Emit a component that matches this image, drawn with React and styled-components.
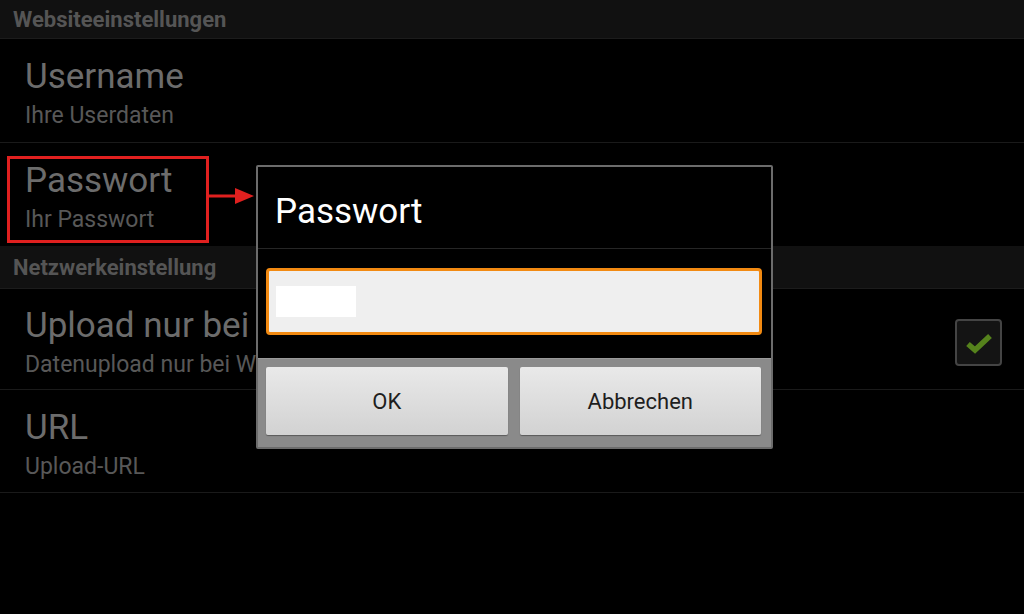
import React from "react";
import styled, { createGlobalStyle } from "styled-components";

const Global = createGlobalStyle`
  html, body {
    margin: 0;
    padding: 0;
    background: #000;
  }
  body {
    font-family: Roboto, "Noto Sans", "Liberation Sans", sans-serif;
  }
`;

const Screen = styled.div`
  position: relative;
  width: 1024px;
  height: 614px;
  overflow: hidden;
  background: #000;
  display: flex;
  flex-direction: column;
`;

const SectionHeader = styled.div`
  height: ${(p) => p.h}px;
  box-sizing: border-box;
  background: #111111;
  border-bottom: 1px solid #1c1c1c;
  display: flex;
  align-items: center;
  padding-left: 13px;
  font-size: 22px;
  font-weight: 700;
  color: #555555;
`;

const Row = styled.div`
  height: ${(p) => p.h}px;
  box-sizing: border-box;
  border-bottom: ${(p) => (p.noLine ? "none" : "1px solid #1a1a1a")};
  display: flex;
  align-items: center;
  justify-content: space-between;
  padding: 7px 22px 0 25px;
`;

const RowText = styled.div`
  display: flex;
  flex-direction: column;
  gap: 6px;
`;

const Title = styled.div`
  font-size: 35px;
  line-height: 38px;
  color: #6c6c6c;
`;

const Subtitle = styled.div`
  font-size: 23px;
  line-height: 28px;
  color: #585858;
`;

const Checkbox = styled.div`
  width: 47px;
  height: 47px;
  box-sizing: border-box;
  border: 2px solid #444;
  border-radius: 4px;
  background: #141414;
  display: flex;
  align-items: center;
  justify-content: center;
`;

const Marker = styled.div`
  position: absolute;
  left: 7px;
  top: 156px;
  width: 202px;
  height: 87px;
  box-sizing: border-box;
  border: 3px solid #e0201f;
`;

const Arrow = styled.svg`
  position: absolute;
  left: 208px;
  top: 185px;
`;

const Dialog = styled.div`
  position: absolute;
  left: 256px;
  top: 165px;
  width: 517px;
  height: 284px;
  box-sizing: border-box;
  border: 2px solid #6c6c6c;
  border-radius: 2px;
  background: #000;
  display: flex;
  flex-direction: column;
`;

const DialogTitle = styled.div`
  height: 82px;
  box-sizing: border-box;
  border-bottom: 1px solid #262626;
  display: flex;
  align-items: center;
  padding-left: 17px;
  padding-top: 7px;
  font-size: 35px;
  color: #fff;
`;

const DialogBody = styled.div`
  flex: 1;
  padding: 19px 9px 0 8px;
`;

const Input = styled.div`
  height: 67px;
  box-sizing: border-box;
  border: 3px solid #f28a12;
  border-radius: 4px;
  background: #efefef;
  display: flex;
  align-items: center;
  padding-left: 7px;
`;

const Masked = styled.div`
  width: 80px;
  height: 31px;
  background: #fff;
`;

const ButtonBar = styled.div`
  height: 89px;
  box-sizing: border-box;
  background: #8a8a8a;
  border-top: 1px solid #9a9a9a;
  display: grid;
  grid-template-columns: 1fr 1fr;
  gap: 12px;
  padding: 8px 10px 12px 8px;
`;

const Button = styled.div`
  background: linear-gradient(#e9e9e9, #d2d2d2);
  border-radius: 2px;
  box-shadow: 0 1px 1px rgba(0, 0, 0, 0.35);
  display: flex;
  align-items: center;
  justify-content: center;
  font-size: 22px;
  color: #1e1e1e;
`;

const items = [
  { type: "header", label: "Websiteeinstellungen", h: 39 },
  { type: "row", title: "Username", sub: "Ihre Userdaten", h: 104 },
  { type: "row", title: "Passwort", sub: "Ihr Passwort", h: 103, noLine: true },
  { type: "header", label: "Netzwerkeinstellung", h: 43 },
  { type: "row", title: "Upload nur bei WLAN", sub: "Datenupload nur bei WLAN-Verbindung", h: 101, check: true },
  { type: "row", title: "URL", sub: "Upload-URL", h: 103 },
];

export default function App() {
  return (
    <>
      <Global />
      <Screen>
        {items.map((it, i) =>
          it.type === "header" ? (
            <SectionHeader key={i} h={it.h}>
              {it.label}
            </SectionHeader>
          ) : (
            <Row key={i} h={it.h} noLine={it.noLine}>
              <RowText>
                <Title>{it.title}</Title>
                <Subtitle>{it.sub}</Subtitle>
              </RowText>
              {it.check && (
                <Checkbox>
                  <svg width="30" height="26" viewBox="0 0 30 26">
                    <path d="M4 14 L11 20 L26 6" fill="none" stroke="#55821c" strokeWidth="5.5" strokeLinejoin="miter" />
                  </svg>
                </Checkbox>
              )}
            </Row>
          )
        )}

        <Marker />
        <Arrow width="48" height="22" viewBox="0 0 48 22">
          <line x1="0" y1="11" x2="30" y2="11" stroke="#e0201f" strokeWidth="3" />
          <polygon points="27,3 46,11 27,19" fill="#e0201f" />
        </Arrow>

        <Dialog>
          <DialogTitle>Passwort</DialogTitle>
          <DialogBody>
            <Input>
              <Masked />
            </Input>
          </DialogBody>
          <ButtonBar>
            <Button>OK</Button>
            <Button>Abbrechen</Button>
          </ButtonBar>
        </Dialog>
      </Screen>
    </>
  );
}
